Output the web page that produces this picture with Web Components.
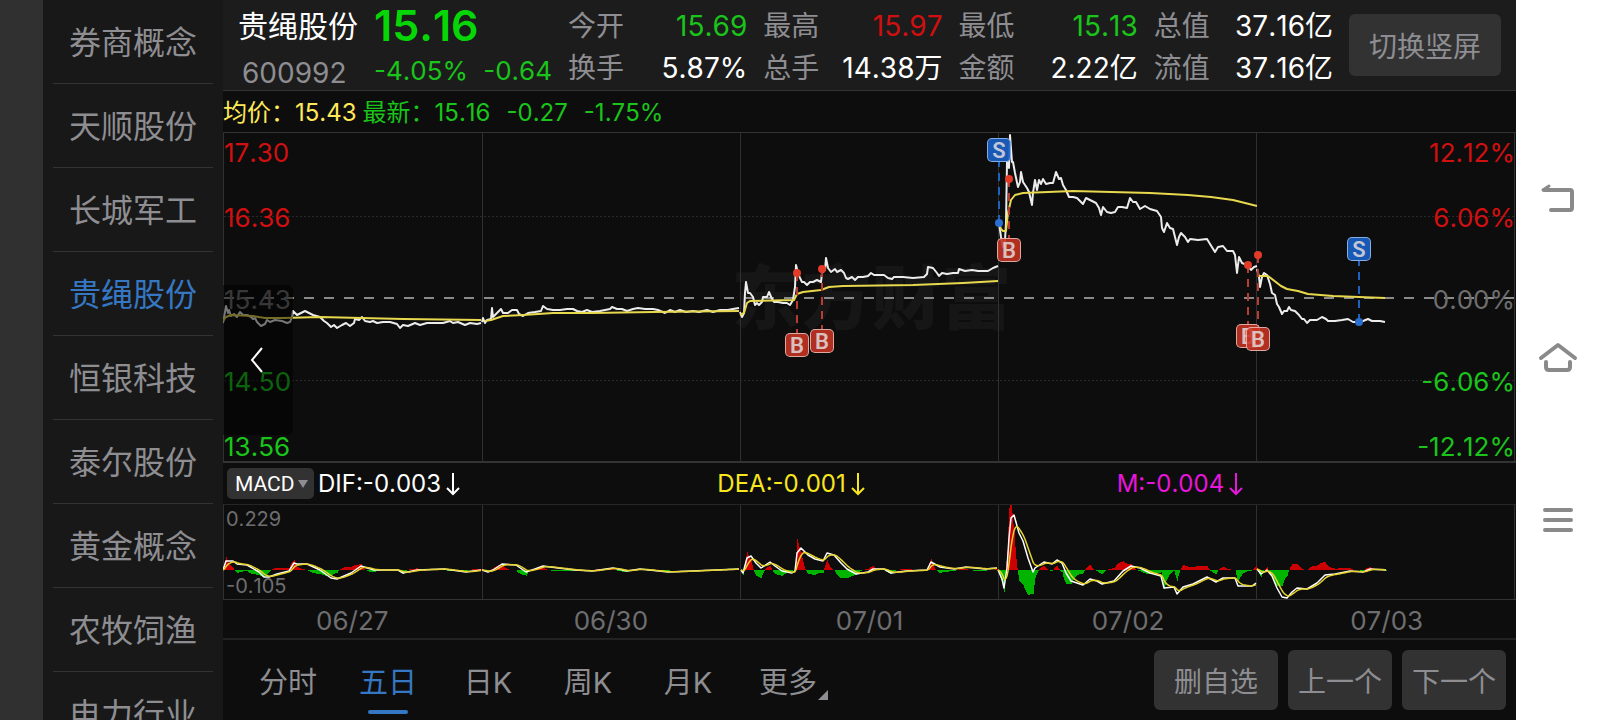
<!DOCTYPE html>
<html lang="zh-CN">
<head>
<meta charset="utf-8">
<meta name="viewport" content="width=device-width, initial-scale=1">
<title>贵绳股份 600992</title>
<style>
    html, body {
        margin: 0;
        height: 100%;
    }
    body {
        overflow: hidden;
        background: #0d0d0d;
        color: #8e8e92;
        font-family: Inter, "Noto Sans CJK SC", sans-serif;
        font-kerning: none;
        --up: #d01010;
        --down: #1ac41a;
        --muted: #8e8e92;
        --axis: #6e6e70;
        --line: #333;
        --accent: #3577c2;
        --button: #323232;
    }
</style>
</head>
<body>
<stock-app></stock-app>

<script>
const DAYS = ['06/27', '06/30', '07/01', '07/02', '07/03'];
const DAY_LINES = [0.5, 259.5, 517.5, 775.5, 1033.5, 1291.5];

// One polyline per trading day, in chart units (1293 x 328).
const PRICE = [
    '0,190 2,179 3,173 5,180 6,177 8,183 11,181 14,184 17,179 20,182 24,182 28,184 30,186 32,185 34,189 38,193 42,191 44,187 47,189 52,187 59,188 64,190 67,189 69,184 70,178 74,182 78,180 82,178 86,180 90,182 97,184 101,188 104,190 108,194 111,192 114,195 119,192 123,190 127,193 131,190 132,186 136,187 139,184 142,188 147,189 150,188 154,190 160,189 167,189 174,191 177,195 180,192 185,193 192,190 197,192 204,190 214,190 220,190 227,188 230,190 235,189 242,192 247,190 254,191 258,190',
    '259,189 260,185 262,190 264,187 268,186 269,175 270,184 274,180 278,176 280,180 285,180 289,177 294,177 296,181 300,183 305,180 312,179 318,178 320,173 324,176 330,177 337,177 344,176 350,176 354,178 359,179 364,177 369,179 377,178 387,176 389,174 394,176 399,176 404,178 410,176 415,175 422,176 430,176 435,177 442,180 447,177 452,179 457,177 463,179 470,178 476,179 484,177 490,179 497,177 505,177 510,176 516,175',
    '517,179 519,184 521,180 522,160 523,149 525,160 527,160 530,164 532,172 534,170 536,172 539,169 540,164 544,164 546,159 549,166 551,169 555,169 560,170 564,170 567,172 570,167 572,154 573,132 575,140 577,145 579,149 581,149 584,152 587,149 590,149 594,147 598,149 599,140 602,137 603,125 605,135 608,139 612,136 614,139 618,137 621,140 623,145 625,146 629,144 632,147 635,144 640,144 645,143 648,140 651,142 655,142 661,142 665,145 669,146 671,144 680,144 690,145 701,144 704,141 705,134 710,135 714,140 716,143 719,140 724,141 730,140 735,140 736,136 742,138 749,137 755,138 765,138 770,135 775,133',
    '776,90 778,104 780,114 782,107 783,90 784,29 786,35 787,2 789,29 790,29 792,40 795,54 797,49 798,39 800,49 804,55 806,59 809,72 810,60 812,47 814,57 816,47 818,51 820,46 823,51 827,50 830,50 833,39 836,46 838,45 840,52 843,57 846,64 850,64 854,65 860,71 863,65 867,67 873,70 876,75 878,82 880,74 884,79 888,80 892,79 895,74 899,74 904,75 907,65 910,69 913,69 917,76 922,73 927,76 934,78 938,84 939,95 941,99 944,90 947,95 950,96 954,112 956,104 958,100 962,104 965,109 967,106 975,107 984,106 987,111 992,119 995,114 1000,113 1004,118 1010,118 1012,122 1014,140 1016,124 1019,130 1024,132 1028,137 1031,134 1034,133',
    '1034,136 1036,144 1037,154 1039,144 1041,140 1044,142 1047,151 1049,160 1052,162 1054,171 1056,174 1059,181 1061,178 1064,178 1066,174 1068,177 1072,178 1076,182 1079,186 1081,186 1084,190 1087,187 1094,187 1099,184 1103,186 1105,188 1112,188 1119,187 1125,186 1130,189 1136,189 1140,188 1145,186 1149,188 1157,188 1162,189'
];
const AVERAGE = [
    '0,188 3,184 8,182 30,183 42,185 60,185 97,184 180,186 258,187',
    '262,188 268,187 280,183 300,182 330,180 370,180 430,179 516,178',
    '517,182 521,180 524,170 527,168 571,167 574,161 580,159 598,157 606,154 620,153 690,152 740,150 775,148',
    '776,90 778,96 780,98 783,98 785,80 788,67 792,62 800,60 850,58 927,60 965,62 988,64 1010,67 1034,73',
    '1034,143 1045,143 1058,153 1064,156 1075,158 1085,161 1110,163 1162,165'
];

// DIF samples in panel units (1293 x 94), zero at y = 65.
const DIF = [
    '0,65 3,56 10,56 14,59 24,60 36,67 41,72 46,72 54,69 66,66 71,58 74,59 84,59 97,65 108,73 114,74 128,68 138,61 151,65 164,65 175,65 180,68 194,65 221,64 243,67 258,65',
    '259,65 265,67 270,65 279,59 293,60 303,67 312,64 320,61 335,63 352,65 369,66 390,63 404,66 417,64 445,67 469,66 516,64',
    '518,65 520,68 524,53 528,51 533,58 538,63 547,57 552,61 559,66 569,68 572,66 574,48 578,43 585,50 592,54 600,56 604,48 611,50 618,58 624,64 633,69 645,67 650,64 661,64 668,68 683,66 704,65 708,57 717,62 731,64 743,62 762,64 774,63',
    '775,65 779,74 781,83 784,63 786,33 788,13 791,10 796,28 800,36 805,53 810,67 812,63 821,57 829,59 834,55 839,58 843,68 848,76 860,80 867,74 874,76 879,79 891,76 900,66 908,61 917,63 927,68 938,71 941,83 951,82 954,89 960,82 970,79 984,72 993,77 1000,73 1012,73 1015,81 1029,81 1033,78',
    '1034,64 1038,69 1044,65 1049,71 1054,83 1059,92 1064,93 1069,87 1074,83 1084,84 1094,78 1102,70 1112,69 1127,66 1140,67 1147,64 1163,65'
];
const MACD_ZERO = 65;

const TRADES = [
    { kind: 'S', x: 776, y: 17, dot: 90 },
    { kind: 'B', x: 786, y: 117, dot: 46 },
    { kind: 'B', x: 574, y: 212, dot: 140 },
    { kind: 'B', x: 599, y: 208, dot: 136 },
    { kind: 'B', x: 1025, y: 203, dot: 132 },
    { kind: 'B', x: 1035, y: 206, dot: 122 },
    { kind: 'S', x: 1136, y: 116, dot: 189 }
];

const lines = (list, cls) => list.map(p => `<polyline class="${cls}" points="${p}"/>`).join('');
const dayRules = (height) => DAY_LINES.map(x => `<path class="rule" d="M${x} 0V${height}"/>`).join('');

class BaseElement extends HTMLElement {
    constructor() {
        super();
        this._shadowRoot = this.attachShadow({ mode: 'open' });
    }
    connectedCallback() {
        this._shadowRoot.innerHTML = this.template;
    }
}

class StockApp extends BaseElement {
    get template() {
        return `
            <style>
                :host {
                    display: grid;
                    grid-template-columns: 43px 180px minmax(0, 1fr) 84px;
                    height: 100vh;
                }
                .edge { background: #303030; }
                main {
                    display: flex;
                    flex-direction: column;
                    min-width: 0;
                    min-height: 0;
                    background: #0d0d0d;
                }
                price-chart { flex: 1; }
            </style>
            <div class="edge"></div>
            <side-list></side-list>
            <main>
                <quote-header></quote-header>
                <average-bar></average-bar>
                <price-chart></price-chart>
                <macd-panel></macd-panel>
                <date-axis></date-axis>
                <period-bar></period-bar>
            </main>
            <system-nav></system-nav>
        `;
    }
}

class SideList extends BaseElement {
    get template() {
        const names = ['券商概念', '天顺股份', '长城军工', '贵绳股份', '恒银科技', '泰尔股份', '黄金概念', '农牧饲渔', '电力行业'];
        return `
            <style>
                :host {
                    display: block;
                    overflow: hidden;
                    background: #181818;
                }
                a {
                    display: block;
                    box-sizing: border-box;
                    height: 84px;
                    margin: 0 10px;
                    border-bottom: 1px solid #333;
                    font-size: 32px;
                    line-height: 86px;
                    text-align: center;
                    text-decoration: none;
                    color: var(--muted);
                    white-space: nowrap;
                }
                a[aria-current] { color: var(--accent); }
            </style>
            <nav>
                ${names.map((n, i) => `<a href="#"${i === 3 ? ' aria-current="page"' : ''}>${n}</a>`).join('')}
            </nav>
        `;
    }
}

class QuoteHeader extends BaseElement {
    get template() {
        const stats = [
            ['今开', '15.69', 'down'], ['最高', '15.97', 'up'], ['最低', '15.13', 'down'], ['总值', '37.16亿', ''],
            ['换手', '5.87%', ''], ['总手', '14.38万', ''], ['金额', '2.22亿', ''], ['流值', '37.16亿', '']
        ];
        return `
            <style>
                :host {
                    display: flex;
                    align-items: center;
                    box-sizing: border-box;
                    height: 91px;
                    padding: 0 15px;
                    border-bottom: 1px solid var(--line);
                    background: #1c1c1c;
                    white-space: nowrap;
                }
                h1, p { margin: 0; font-weight: 400; }
                .stock { align-self: flex-start; }
                h1 { font-size: 30px; line-height: 52px; color: #fff; }
                .code { padding-left: 4px; font-size: 28px; line-height: 42px; }
                .now { width: 178px; margin-left: 16px; color: #06d606; }
                .price { font-size: 43px; line-height: 52px; font-weight: 600; }
                .change {
                    display: flex;
                    justify-content: space-between;
                    font-size: 26px;
                    line-height: 40px;
                    color: var(--down);
                }
                dl {
                    display: grid;
                    flex: 1;
                    grid-template-columns: repeat(4, 1fr);
                    column-gap: 16px;
                    margin: 0 16px;
                    padding-top: 4px;
                }
                dl div {
                    display: flex;
                    justify-content: space-between;
                    font-size: 28px;
                    line-height: 42px;
                }
                dd { margin: 0; color: #fff; }
                .up { color: var(--up); }
                .down { color: var(--down); }
                button {
                    width: 152px;
                    height: 62px;
                    padding: 0;
                    border: 0;
                    border-radius: 6px;
                    background: var(--button);
                    color: var(--muted);
                    font: inherit;
                    font-size: 28px;
                }
            </style>
            <div class="stock">
                <h1>贵绳股份</h1>
                <p class="code">600992</p>
            </div>
            <div class="now">
                <p class="price">15.16</p>
                <p class="change"><span>-4.05%</span><span>-0.64</span></p>
            </div>
            <dl>
                ${stats.map(([k, v, c]) => `<div><dt>${k}</dt><dd class="${c}">${v}</dd></div>`).join('')}
            </dl>
            <button type="button">切换竖屏</button>
        `;
    }
}

class AverageBar extends BaseElement {
    get template() {
        return `
            <style>
                :host {
                    display: flex;
                    box-sizing: border-box;
                    height: 42px;
                    border-bottom: 1px solid var(--line);
                    font-size: 24px;
                    line-height: 44px;
                    color: var(--down);
                    white-space: nowrap;
                }
                .avg { margin-right: 6px; color: #ffe95a; }
                .gap { margin-left: 16px; }
            </style>
            <span class="avg">均价：15.43</span>
            <span>最新：15.16</span>
            <span class="gap">-0.27</span>
            <span class="gap">-1.75%</span>
        `;
    }
}

class TradePin extends BaseElement {
    get template() {
        return `
            <style>
                :host {
                    position: absolute;
                    box-sizing: border-box;
                    width: 24px;
                    height: 24px;
                    margin: -12px 0 0 -12px;
                    border: 1px solid rgba(235, 200, 195, .8);
                    border-radius: 5px;
                    background: rgba(200, 52, 36, .88);
                    color: rgba(225, 220, 220, .85);
                    font-family: Roboto, sans-serif;
                    font-size: 22px;
                    font-weight: 600;
                    line-height: 24px;
                    text-align: center;
                }
                :host([kind="S"]) {
                    border-color: rgba(160, 195, 240, .8);
                    background: rgba(26, 96, 196, .92);
                }
            </style>
            <slot></slot>
        `;
    }
}

class PriceChart extends BaseElement {
    get template() {
        const stems = TRADES.map(t => `
            <g class="${t.kind}">
                <path class="stem" d="M${t.x} ${t.dot}V${t.y > t.dot ? t.y - 12 : t.y + 12}"/>
                <circle cx="${t.x}" cy="${t.dot}" r="4"/>
            </g>`).join('');
        const pins = TRADES.map(t => `
            <trade-pin kind="${t.kind}" style="left: ${t.x / 1293 * 100}%; top: ${t.y / 328 * 100}%">${t.kind}</trade-pin>`).join('');
        return `
            <style>
                :host {
                    display: grid;
                    grid-template: minmax(0, 1fr) / minmax(0, 1fr);
                    position: relative;
                    box-sizing: border-box;
                    min-height: 0;
                    border-bottom: 2px solid var(--line);
                }
                svg.plot, .mark, .scale { grid-area: 1 / 1; }
                svg.plot { width: 100%; height: 100%; min-height: 0; }
                .plot * { vector-effect: non-scaling-stroke; }
                .rule { stroke: #303030; }
                .dots { stroke: #2a2a2a; stroke-dasharray: 2 2; }
                .mid { stroke: #8a8a8a; stroke-width: 2; stroke-dasharray: 10 10; }
                polyline { fill: none; stroke-width: 2; stroke-linejoin: round; }
                .price { stroke: #ececec; }
                .avg { stroke: #e8d84e; }
                .stem { stroke-width: 2; stroke-dasharray: 8 6; }
                .B { fill: #e23c28; stroke: #b83c30; }
                .S { fill: #2a6fd0; stroke: #1f62bd; }
                circle { stroke: none; }
                .mark {
                    place-self: center;
                    padding: 4px 0 0 4px;
                    font-size: 70px;
                    line-height: 72px;
                    font-weight: 900;
                    color: #161616;
                }
                .scale {
                    display: grid;
                    grid-template-rows: 40px 1fr 1fr 1fr 38px;
                    align-items: center;
                    padding: 4px 1px 0;
                    font-size: 26px;
                    line-height: 32px;
                    color: var(--axis);
                }
                .scale :first-child { align-self: start; }
                .scale :last-child { align-self: end; line-height: 28px; }
                .right { text-align: right; }
                .up { color: var(--up); }
                .down { color: var(--down); }
                button {
                    position: absolute;
                    top: 152px;
                    left: 0;
                    width: 70px;
                    height: 150px;
                    padding: 0 2px 0 0;
                    border: 0;
                    border-radius: 0 6px 6px 0;
                    background: rgba(0, 0, 0, .5);
                }
                button svg { display: block; margin: 0 auto; }
            </style>
            <div class="mark">东方财富</div>
            <svg class="plot" viewBox="0 0 1293 328" preserveAspectRatio="none">
                ${dayRules(328)}
                <path class="dots" d="M1 83.5H1292M1 247.5H1292"/>
                <path class="mid" d="M1 165H1292"/>
                ${lines(PRICE, 'price')}
                ${lines(AVERAGE, 'avg')}
                ${stems}
            </svg>
            <div class="scale">
                <span class="up">17.30</span>
                <span class="up">16.36</span>
                <span>15.43</span>
                <span class="down">14.50</span>
                <span class="down">13.56</span>
            </div>
            <div class="scale right">
                <span class="up">12.12%</span>
                <span class="up">6.06%</span>
                <span>0.00%</span>
                <span class="down">-6.06%</span>
                <span class="down">-12.12%</span>
            </div>
            ${pins}
            <button type="button" aria-label="收起">
                <svg width="14" height="26" viewBox="0 0 14 26" fill="none" stroke="#fff" stroke-width="2">
                    <path d="M12 1L2 13L12 25"/>
                </svg>
            </button>
        `;
    }
}

class MacdPanel extends BaseElement {
    // Resample DIF once per unit, smooth it to DEA, and take the bars from the difference.
    plotDay(text) {
        const pts = text.split(' ').map(p => p.split(',').map(Number));
        const end = pts[pts.length - 1][0];
        let seg = 0;
        let dea = pts[0][1];
        let deaLine = '';
        let red = '';
        let green = '';
        for (let x = pts[0][0]; x <= end; x++) {
            while (seg < pts.length - 2 && x > pts[seg + 1][0]) {
                seg++;
            }
            const [x0, y0] = pts[seg];
            const [x1, y1] = pts[seg + 1];
            const dif = y0 + (y1 - y0) * (x - x0) / (x1 - x0);
            dea += (dif - dea) * 0.22;
            deaLine += `${x},${dea.toFixed(1)} `;
            const bar = Math.max(-MACD_ZERO, Math.min(28, (dif - dea) * 2.4)).toFixed(1);
            if (bar < 0) {
                red += `M${x + 0.5} ${MACD_ZERO}v${bar}`;
            } else {
                green += `M${x + 0.5} ${MACD_ZERO}v${bar}`;
            }
        }
        return `
            <path class="red" d="${red}"/>
            <path class="green" d="${green}"/>
            <polyline class="dif" points="${text}"/>
            <polyline class="dea" points="${deaLine}"/>
        `;
    }
    get template() {
        const arrow = `<svg width="14" height="24" viewBox="0 0 14 24" fill="none" stroke="currentColor" stroke-width="2"><path d="M7 1V22M1 16L7 22L13 16"/></svg>`;
        return `
            <style>
                :host { display: block; }
                .legend {
                    display: grid;
                    grid-template-columns: 95px repeat(3, minmax(0, 1fr));
                    align-items: center;
                    height: 41px;
                    border-bottom: 1px solid #262626;
                    font-size: 24px;
                    white-space: nowrap;
                }
                .value { display: flex; align-items: center; gap: 5px; }
                .pick {
                    display: grid;
                    width: 87px;
                    margin-left: 4px;
                    align-items: center;
                }
                .pick > * { grid-area: 1 / 1; }
                .pick svg { justify-self: end; margin-right: 6px; pointer-events: none; }
                select {
                    appearance: none;
                    width: 100%;
                    height: 31px;
                    padding: 0 0 0 8px;
                    border: 0;
                    border-radius: 5px;
                    background: var(--button);
                    color: #fff;
                    font-family: Roboto, sans-serif;
                    font-size: 21px;
                }
                .chart {
                    display: grid;
                    grid-template-rows: 94px;
                    border-bottom: 1px solid var(--line);
                }
                .plot, .scale { grid-area: 1 / 1; }
                .plot { width: 100%; height: 100%; }
                .plot * { vector-effect: non-scaling-stroke; }
                .rule { stroke: #303030; }
                .red { stroke: #cc0000; shape-rendering: crispEdges; }
                .green { stroke: #00b400; shape-rendering: crispEdges; }
                polyline { fill: none; stroke-width: 1.5; stroke-linejoin: round; }
                .dif { stroke: #fff; }
                .dea { stroke: #e6d32e; }
                .scale {
                    display: flex;
                    flex-direction: column;
                    justify-content: space-between;
                    padding: 2px 3px 1px;
                    font-size: 20px;
                    line-height: 24px;
                    color: var(--axis);
                }
            </style>
            <div class="legend">
                <div class="pick">
                    <select aria-label="指标"><option>MACD</option></select>
                    <svg width="10" height="8" viewBox="0 0 10 8"><path d="M0 0H10L5 8Z" fill="#8e8e92"/></svg>
                </div>
                <span class="value" style="color: #fff">DIF:-0.003${arrow}</span>
                <span class="value" style="color: #f7e71e">DEA:-0.001${arrow}</span>
                <span class="value" style="color: #e815dc">M:-0.004${arrow}</span>
            </div>
            <div class="chart">
                <svg class="plot" viewBox="0 0 1293 94" preserveAspectRatio="none">
                    ${dayRules(94)}
                    ${DIF.map(d => this.plotDay(d)).join('')}
                </svg>
                <div class="scale"><span>0.229</span><span>-0.105</span></div>
            </div>
        `;
    }
}

class DateAxis extends BaseElement {
    get template() {
        return `
            <style>
                :host {
                    display: grid;
                    grid-template-columns: repeat(5, 1fr);
                    height: 38px;
                    border-bottom: 2px solid #222;
                    font-size: 26px;
                    line-height: 42px;
                    text-align: center;
                    color: var(--axis);
                }
            </style>
            ${DAYS.map(d => `<span>${d}</span>`).join('')}
        `;
    }
}

class PeriodBar extends BaseElement {
    get template() {
        const tabs = ['分时', '五日', '日K', '周K', '月K'];
        return `
            <style>
                :host {
                    display: flex;
                    align-items: center;
                    justify-content: space-between;
                    height: 80px;
                    padding: 0 10px 0 15px;
                    white-space: nowrap;
                }
                nav, .actions { display: flex; }
                .actions { gap: 10px; }
                nav button {
                    display: grid;
                    grid-template-rows: 1fr 4px;
                    justify-items: center;
                    align-items: center;
                    width: 100px;
                    height: 80px;
                    padding: 0 0 6px;
                    border: 0;
                    background: none;
                    color: var(--muted);
                    font: inherit;
                    font-size: 29px;
                }
                nav span { padding-top: 10px; }
                nav .on { color: var(--accent); }
                nav .on::after {
                    content: "";
                    width: 40px;
                    height: 4px;
                    border-radius: 2px;
                    background: var(--accent);
                }
                .more { position: relative; }
                .more svg { position: absolute; right: 10px; bottom: 20px; }
                .actions button {
                    width: 104px;
                    height: 60px;
                    padding: 0;
                    border: 0;
                    border-radius: 6px;
                    background: var(--button);
                    color: var(--muted);
                    font: inherit;
                    font-size: 28px;
                }
                .actions .wide { width: 124px; }
            </style>
            <nav>
                ${tabs.map((t, i) => `<button type="button"${i === 1 ? ' class="on"' : ''}><span>${t}</span></button>`).join('')}
                <button type="button" class="more"><span>更多</span>
                    <svg width="10" height="10" viewBox="0 0 10 10"><path d="M10 0V10H0Z" fill="#8e8e92"/></svg>
                </button>
            </nav>
            <div class="actions">
                <button type="button" class="wide">删自选</button>
                <button type="button">上一个</button>
                <button type="button">下一个</button>
            </div>
        `;
    }
}

class SystemNav extends BaseElement {
    get template() {
        return `
            <style>
                :host {
                    display: flex;
                    flex-direction: column;
                    justify-content: center;
                    background: #fff;
                }
                button {
                    display: grid;
                    place-items: center;
                    height: 160px;
                    padding: 0;
                    border: 0;
                    background: none;
                }
                svg {
                    fill: none;
                    stroke: #8a8a8a;
                    stroke-width: 4;
                    stroke-linecap: round;
                    stroke-linejoin: round;
                }
            </style>
            <button type="button" aria-label="返回">
                <svg width="40" height="32" viewBox="0 0 40 32"><path d="M13 26H32Q34 26 34 24V8Q34 6 32 6H6"/><path d="M5 6L11 2" stroke-width="3"/></svg>
            </button>
            <button type="button" aria-label="主页">
                <svg width="42" height="38" viewBox="0 0 42 38"><path d="M4 17L21 4L38 17M9 21V26Q9 29 12 29H30Q33 29 33 26V21"/></svg>
            </button>
            <button type="button" aria-label="菜单">
                <svg width="34" height="24" viewBox="0 0 34 24"><path d="M4 2H30M4 12H30M4 22H30"/></svg>
            </button>
        `;
    }
}

window.customElements.define('side-list', SideList);
window.customElements.define('quote-header', QuoteHeader);
window.customElements.define('average-bar', AverageBar);
window.customElements.define('trade-pin', TradePin);
window.customElements.define('price-chart', PriceChart);
window.customElements.define('macd-panel', MacdPanel);
window.customElements.define('date-axis', DateAxis);
window.customElements.define('period-bar', PeriodBar);
window.customElements.define('system-nav', SystemNav);
window.customElements.define('stock-app', StockApp);
</script>
</body>
</html>
